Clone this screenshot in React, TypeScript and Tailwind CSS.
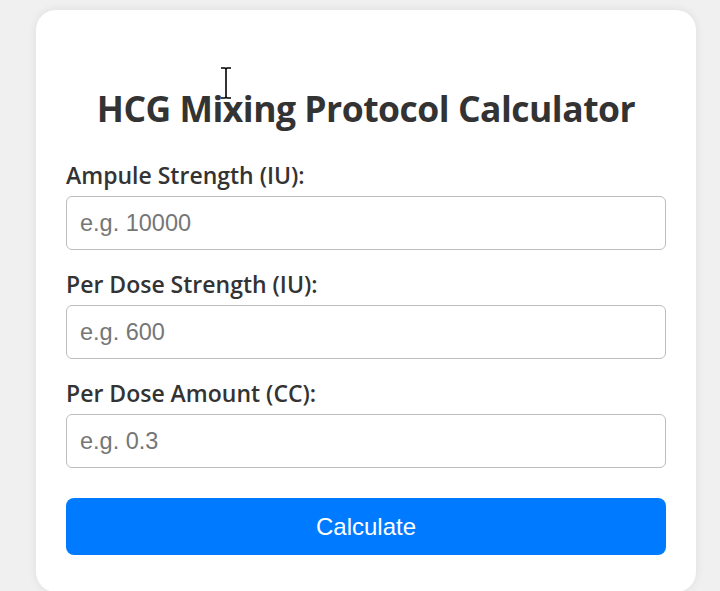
import { useState } from "react";

const fields = [
  { label: "Ampule Strength (IU):", placeholder: "e.g. 10000" },
  { label: "Per Dose Strength (IU):", placeholder: "e.g. 600" },
  { label: "Per Dose Amount (CC):", placeholder: "e.g. 0.3" },
];

export default function App() {
  const [values, setValues] = useState(["", "", ""]);

  return (
    <div className="relative min-h-[591px] bg-[#f0f0f0] pt-[10px] pl-[36px] overflow-hidden">
      {/* Card */}
      <div className="w-[660px] min-h-[582px] bg-white rounded-[20px] shadow-[0_0_10px_rgba(0,0,0,0.08)] px-[30px] pt-[74px] pb-[30px]">
        <h1 className="text-center text-[35.5px] leading-[48px] font-bold text-[#333] font-['Open_Sans',sans-serif] tracking-[-0.5px] mb-[27px]">
          HCG Mixing Protocol Calculator
        </h1>

        {fields.map((f, i) => (
          <div key={f.label} className="mb-[18px]">
            <label className="block text-[23px] leading-[32px] font-semibold text-[#333] font-['Open_Sans',sans-serif] mb-[5px]">
              {f.label}
            </label>
            <input
              type="number"
              placeholder={f.placeholder}
              value={values[i]}
              onChange={(e) => {
                const next = [...values];
                next[i] = e.target.value;
                setValues(next);
              }}
              className="block w-full h-[54px] px-[13px] border border-[#bdbdbd] rounded-[6px] text-[23.5px] font-['Liberation_Sans',Arial,sans-serif] text-[#333] placeholder:text-[#767676] outline-none"
            />
          </div>
        ))}

        <button className="w-full h-[57px] mt-[12px] bg-[#007bff] rounded-[8px] text-white text-[24px] font-['Liberation_Sans',Arial,sans-serif]">
          Calculate
        </button>
      </div>

      {/* mouse cursor */}
      <svg className="absolute left-[219px] top-[67px]" width="14" height="32" viewBox="0 0 14 32">
        <path d="M2 1h4l1 1 1-1h4M7 2v28M2 31h4l1-1 1 1h4" stroke="#000" strokeWidth="1.6" fill="none" />
      </svg>
    </div>
  );
}
